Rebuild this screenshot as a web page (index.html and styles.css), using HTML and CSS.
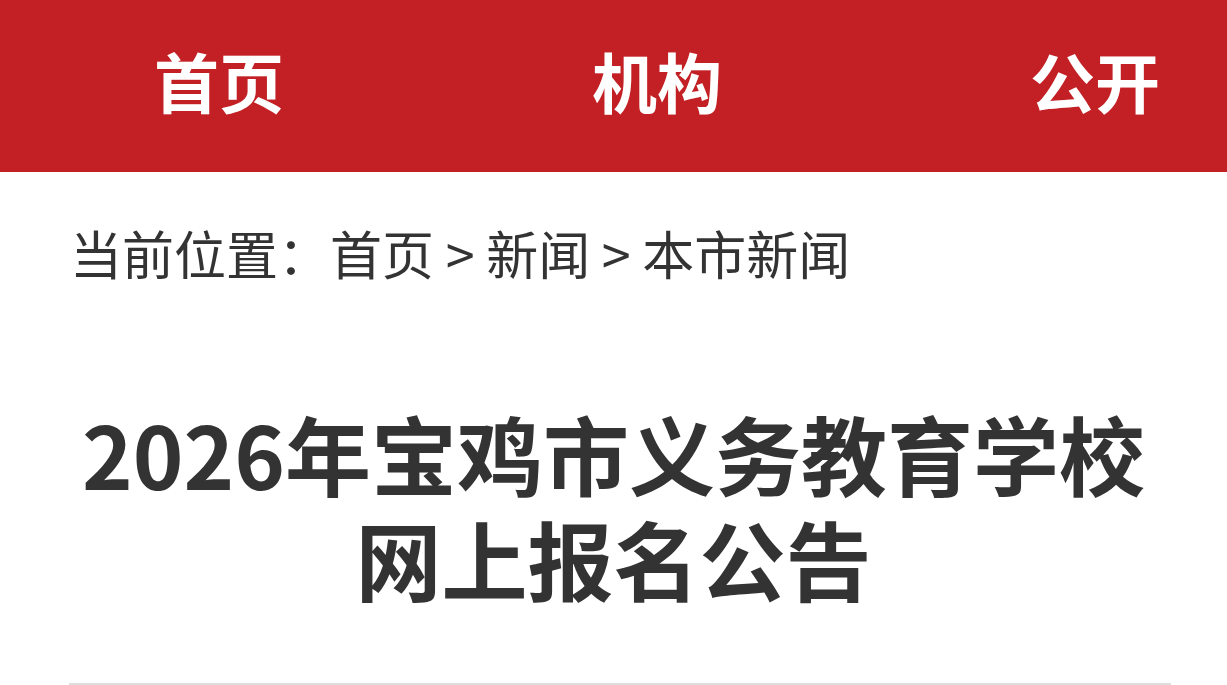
FILE: index.html
```html
<!DOCTYPE html>
<html lang="zh-CN">
<head>
<meta charset="utf-8">
<title>2026年宝鸡市义务教育学校网上报名公告</title>
<link rel="stylesheet" href="styles.css">
</head>
<body>
<nav class="topnav">
  <a class="nav-item" href="#">首页</a>
  <a class="nav-item" href="#">机构</a>
  <a class="nav-item" href="#">公开</a>
</nav>
<div class="crumb">当前位置：<a href="#">首页</a> &gt; <a href="#">新闻</a> &gt; <a href="#">本市新闻</a></div>
<h1 class="title">2026年宝鸡市义务教育学校<br>网上报名公告</h1>
<div class="rule"></div>
</body>
</html>
```
FILE: styles.css
```css
html, body {
  margin: 0;
  padding: 0;
  background: #ffffff;
  overflow: hidden;
}
body {
  font-family: "Noto Sans CJK SC", "Noto Sans", sans-serif;
  color: #333333;
  width: 1227px;
  height: 685px;
}
.topnav {
  display: flex;
  height: 160px;
  padding-bottom: 12px;
  background: #c22025;
  overflow: hidden;
}
.nav-item {
  flex: 0 0 438px;
  display: flex;
  align-items: center;
  justify-content: center;
  color: #ffffff;
  text-decoration: none;
  font-size: 65px;
  font-weight: 700;
}
.crumb {
  margin-top: 42px;
  padding-left: 70px;
  font-size: 52px;
  line-height: 78px;
  color: #333333;
}
.crumb a {
  color: #333333;
  text-decoration: none;
}
.title {
  margin: 108px 0 0 0;
  text-align: center;
  font-size: 86px;
  line-height: 105px;
  font-weight: 700;
  color: #333333;
}
.rule {
  margin: 73px 0 0 69px;
  width: 1102px;
  height: 2px;
  background: #dddddd;
}
```
